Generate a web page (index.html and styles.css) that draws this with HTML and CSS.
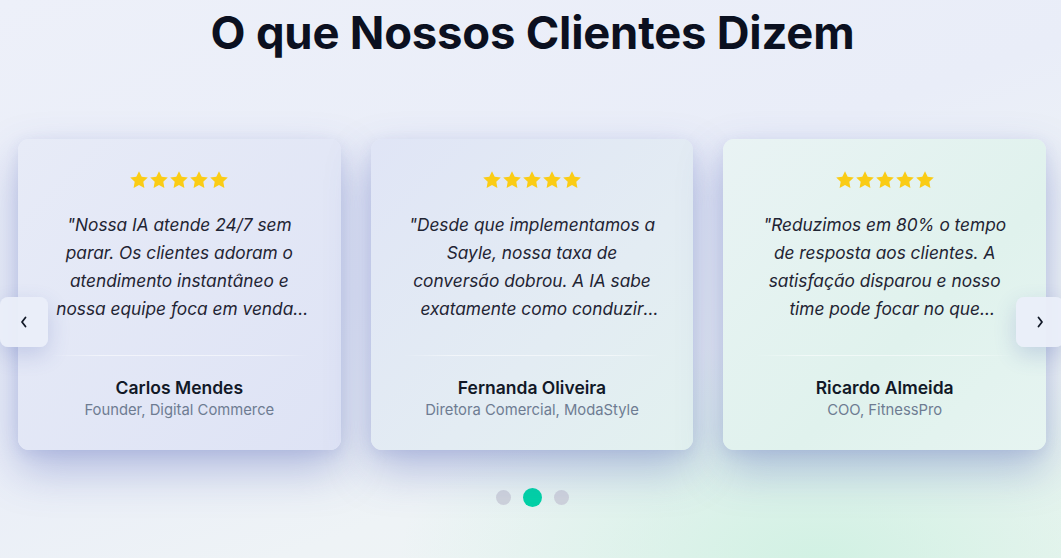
FILE: index.html
```html
<!DOCTYPE html>
<html lang="pt">
<head>
<meta charset="utf-8">
<title>Depoimentos</title>
<link rel="stylesheet" href="styles.css">
</head>
<body>
<section class="testimonials">
  <h1 class="title">O que Nossos Clientes Dizem</h1>
  <div class="carousel">
    <button class="nav nav-prev" aria-label="Anterior">
      <svg width="10" height="14" viewBox="0 0 10 14"><path d="M6.5 2.5 L3 7 L6.5 11.5" fill="none" stroke="#111827" stroke-width="1.8" stroke-linecap="round" stroke-linejoin="round"/></svg>
    </button>
    <div class="track">
      <article class="card">
        <div class="stars">
          <svg viewBox="0 0 20 20"><path d="M10 1.2l2.7 5.6 6.1.8-4.5 4.2 1.1 6.1L10 15l-5.4 2.9 1.1-6.1L1.2 7.6l6.1-.8z"/></svg>
          <svg viewBox="0 0 20 20"><path d="M10 1.2l2.7 5.6 6.1.8-4.5 4.2 1.1 6.1L10 15l-5.4 2.9 1.1-6.1L1.2 7.6l6.1-.8z"/></svg>
          <svg viewBox="0 0 20 20"><path d="M10 1.2l2.7 5.6 6.1.8-4.5 4.2 1.1 6.1L10 15l-5.4 2.9 1.1-6.1L1.2 7.6l6.1-.8z"/></svg>
          <svg viewBox="0 0 20 20"><path d="M10 1.2l2.7 5.6 6.1.8-4.5 4.2 1.1 6.1L10 15l-5.4 2.9 1.1-6.1L1.2 7.6l6.1-.8z"/></svg>
          <svg viewBox="0 0 20 20"><path d="M10 1.2l2.7 5.6 6.1.8-4.5 4.2 1.1 6.1L10 15l-5.4 2.9 1.1-6.1L1.2 7.6l6.1-.8z"/></svg>
        </div>
        <p class="quote">"Nossa IA atende 24/7 sem parar. Os clientes adoram o atendimento instantâneo e nossa equipe foca em vendas complexas. Resultado incrível!"</p>
        <div class="divider"></div>
        <div class="author">
          <div class="name">Carlos Mendes</div>
          <div class="role">Founder, Digital Commerce</div>
        </div>
      </article>
      <article class="card">
        <div class="stars">
          <svg viewBox="0 0 20 20"><path d="M10 1.2l2.7 5.6 6.1.8-4.5 4.2 1.1 6.1L10 15l-5.4 2.9 1.1-6.1L1.2 7.6l6.1-.8z"/></svg>
          <svg viewBox="0 0 20 20"><path d="M10 1.2l2.7 5.6 6.1.8-4.5 4.2 1.1 6.1L10 15l-5.4 2.9 1.1-6.1L1.2 7.6l6.1-.8z"/></svg>
          <svg viewBox="0 0 20 20"><path d="M10 1.2l2.7 5.6 6.1.8-4.5 4.2 1.1 6.1L10 15l-5.4 2.9 1.1-6.1L1.2 7.6l6.1-.8z"/></svg>
          <svg viewBox="0 0 20 20"><path d="M10 1.2l2.7 5.6 6.1.8-4.5 4.2 1.1 6.1L10 15l-5.4 2.9 1.1-6.1L1.2 7.6l6.1-.8z"/></svg>
          <svg viewBox="0 0 20 20"><path d="M10 1.2l2.7 5.6 6.1.8-4.5 4.2 1.1 6.1L10 15l-5.4 2.9 1.1-6.1L1.2 7.6l6.1-.8z"/></svg>
        </div>
        <p class="quote">"Desde que implementamos a Sayle, nossa taxa de conversão dobrou. A IA sabe exatamente como conduzir cada conversa até o fechamento."</p>
        <div class="divider"></div>
        <div class="author">
          <div class="name">Fernanda Oliveira</div>
          <div class="role">Diretora Comercial, ModaStyle</div>
        </div>
      </article>
      <article class="card">
        <div class="stars">
          <svg viewBox="0 0 20 20"><path d="M10 1.2l2.7 5.6 6.1.8-4.5 4.2 1.1 6.1L10 15l-5.4 2.9 1.1-6.1L1.2 7.6l6.1-.8z"/></svg>
          <svg viewBox="0 0 20 20"><path d="M10 1.2l2.7 5.6 6.1.8-4.5 4.2 1.1 6.1L10 15l-5.4 2.9 1.1-6.1L1.2 7.6l6.1-.8z"/></svg>
          <svg viewBox="0 0 20 20"><path d="M10 1.2l2.7 5.6 6.1.8-4.5 4.2 1.1 6.1L10 15l-5.4 2.9 1.1-6.1L1.2 7.6l6.1-.8z"/></svg>
          <svg viewBox="0 0 20 20"><path d="M10 1.2l2.7 5.6 6.1.8-4.5 4.2 1.1 6.1L10 15l-5.4 2.9 1.1-6.1L1.2 7.6l6.1-.8z"/></svg>
          <svg viewBox="0 0 20 20"><path d="M10 1.2l2.7 5.6 6.1.8-4.5 4.2 1.1 6.1L10 15l-5.4 2.9 1.1-6.1L1.2 7.6l6.1-.8z"/></svg>
        </div>
        <p class="quote">"Reduzimos em 80% o tempo de resposta aos clientes. A satisfação disparou e nosso time pode focar no que realmente importa."</p>
        <div class="divider"></div>
        <div class="author">
          <div class="name">Ricardo Almeida</div>
          <div class="role">COO, FitnessPro</div>
        </div>
      </article>
    </div>
    <button class="nav nav-next" aria-label="Próximo">
      <svg width="10" height="14" viewBox="0 0 10 14"><path d="M3.5 2.5 L7 7 L3.5 11.5" fill="none" stroke="#111827" stroke-width="1.8" stroke-linecap="round" stroke-linejoin="round"/></svg>
    </button>
  </div>
  <div class="dots">
    <span class="dot"></span>
    <span class="dot active"></span>
    <span class="dot"></span>
  </div>
</section>
</body>
</html>
```

FILE: styles.css
```css
* { box-sizing: border-box; }

html, body {
  margin: 0;
  height: 100%;
}

body {
  font-family: "Inter", "Noto Sans", sans-serif;
  color: #0f172a;
  overflow: hidden;
  background:
    radial-gradient(ellipse 420px 220px at 820px 560px, rgba(200, 240, 222, 0.75), rgba(200, 240, 222, 0) 100%),
    linear-gradient(160deg, #edf0f9 0%, #e9edf8 45%, #eef3f6 70%, #eef5f2 100%);
}

.testimonials {
  display: flex;
  flex-direction: column;
  align-items: stretch;
  padding-top: 6px;
}

.title {
  margin: 0;
  padding-left: 4px;
  text-align: center;
  font-size: 45.4px;
  line-height: 54px;
  font-weight: 700;
  letter-spacing: -0.2px;
  color: #0b1020;
}

.carousel {
  position: relative;
  margin-top: 79px;
  padding-left: 18px;
}

.track {
  width: 1028px;
  display: grid;
  grid-template-columns: repeat(3, 1fr);
  gap: 30px;
}

.card {
  height: 311px;
  border-radius: 11px;
  padding: 31px 32px 0;
  display: flex;
  flex-direction: column;
  align-items: center;
  box-shadow: 0 20px 44px rgba(70, 88, 180, 0.34), 0 4px 14px rgba(70, 88, 180, 0.1);
}

.card:nth-child(1) { background: linear-gradient(135deg, #e7ebf7 0%, #dee3f5 100%); }
.card:nth-child(2) { background: linear-gradient(135deg, #e0e5f6 0%, #e3ecf3 60%, #e2f1ef 100%); }
.card:nth-child(3) { background: linear-gradient(135deg, #e9f3f4 0%, #e0f2ed 60%, #e6f4f1 100%); }

.stars {
  display: flex;
  gap: 0;
  height: 20px;
}

.stars svg {
  width: 20px;
  height: 20px;
  fill: #facc15;
}

.quote {
  margin: 21px 0 0;
  font-size: 17.3px;
  line-height: 28px;
  font-style: italic;
  color: #1f2433;
  text-align: center;
  display: -webkit-box;
  -webkit-line-clamp: 4;
  -webkit-box-orient: vertical;
  overflow: hidden;
  height: 112px;
}

.divider {
  margin-top: 32px;
  align-self: stretch;
  height: 1px;
  background: linear-gradient(90deg, rgba(255,255,255,0) 0%, rgba(255,255,255,0.55) 20%, rgba(255,255,255,0.55) 80%, rgba(255,255,255,0) 100%);
}

.author {
  padding-top: 20px;
  text-align: center;
}

.name {
  font-size: 17.5px;
  line-height: 24px;
  font-weight: 600;
  color: #111827;
}

.role {
  font-size: 14.8px;
  line-height: 21px;
  color: #6e7c92;
}

.nav {
  position: absolute;
  top: 158px;
  width: 48px;
  height: 50px;
  border: none;
  border-radius: 8px;
  background: rgba(234, 238, 249, 0.95);
  box-shadow: 0 8px 22px rgba(60, 80, 170, 0.2);
  display: flex;
  align-items: center;
  justify-content: center;
  padding: 0;
}

.nav-prev { left: 0; }
.nav-next { left: 1016px; }

.dots {
  margin-top: 38px;
  display: flex;
  justify-content: center;
  align-items: center;
  gap: 12px;
  padding-left: 3px;
}

.dot {
  width: 15px;
  height: 15px;
  border-radius: 50%;
  background: #cfd3dc;
}

.dot.active {
  width: 19px;
  height: 19px;
  background: #00d3a6;
}
```
